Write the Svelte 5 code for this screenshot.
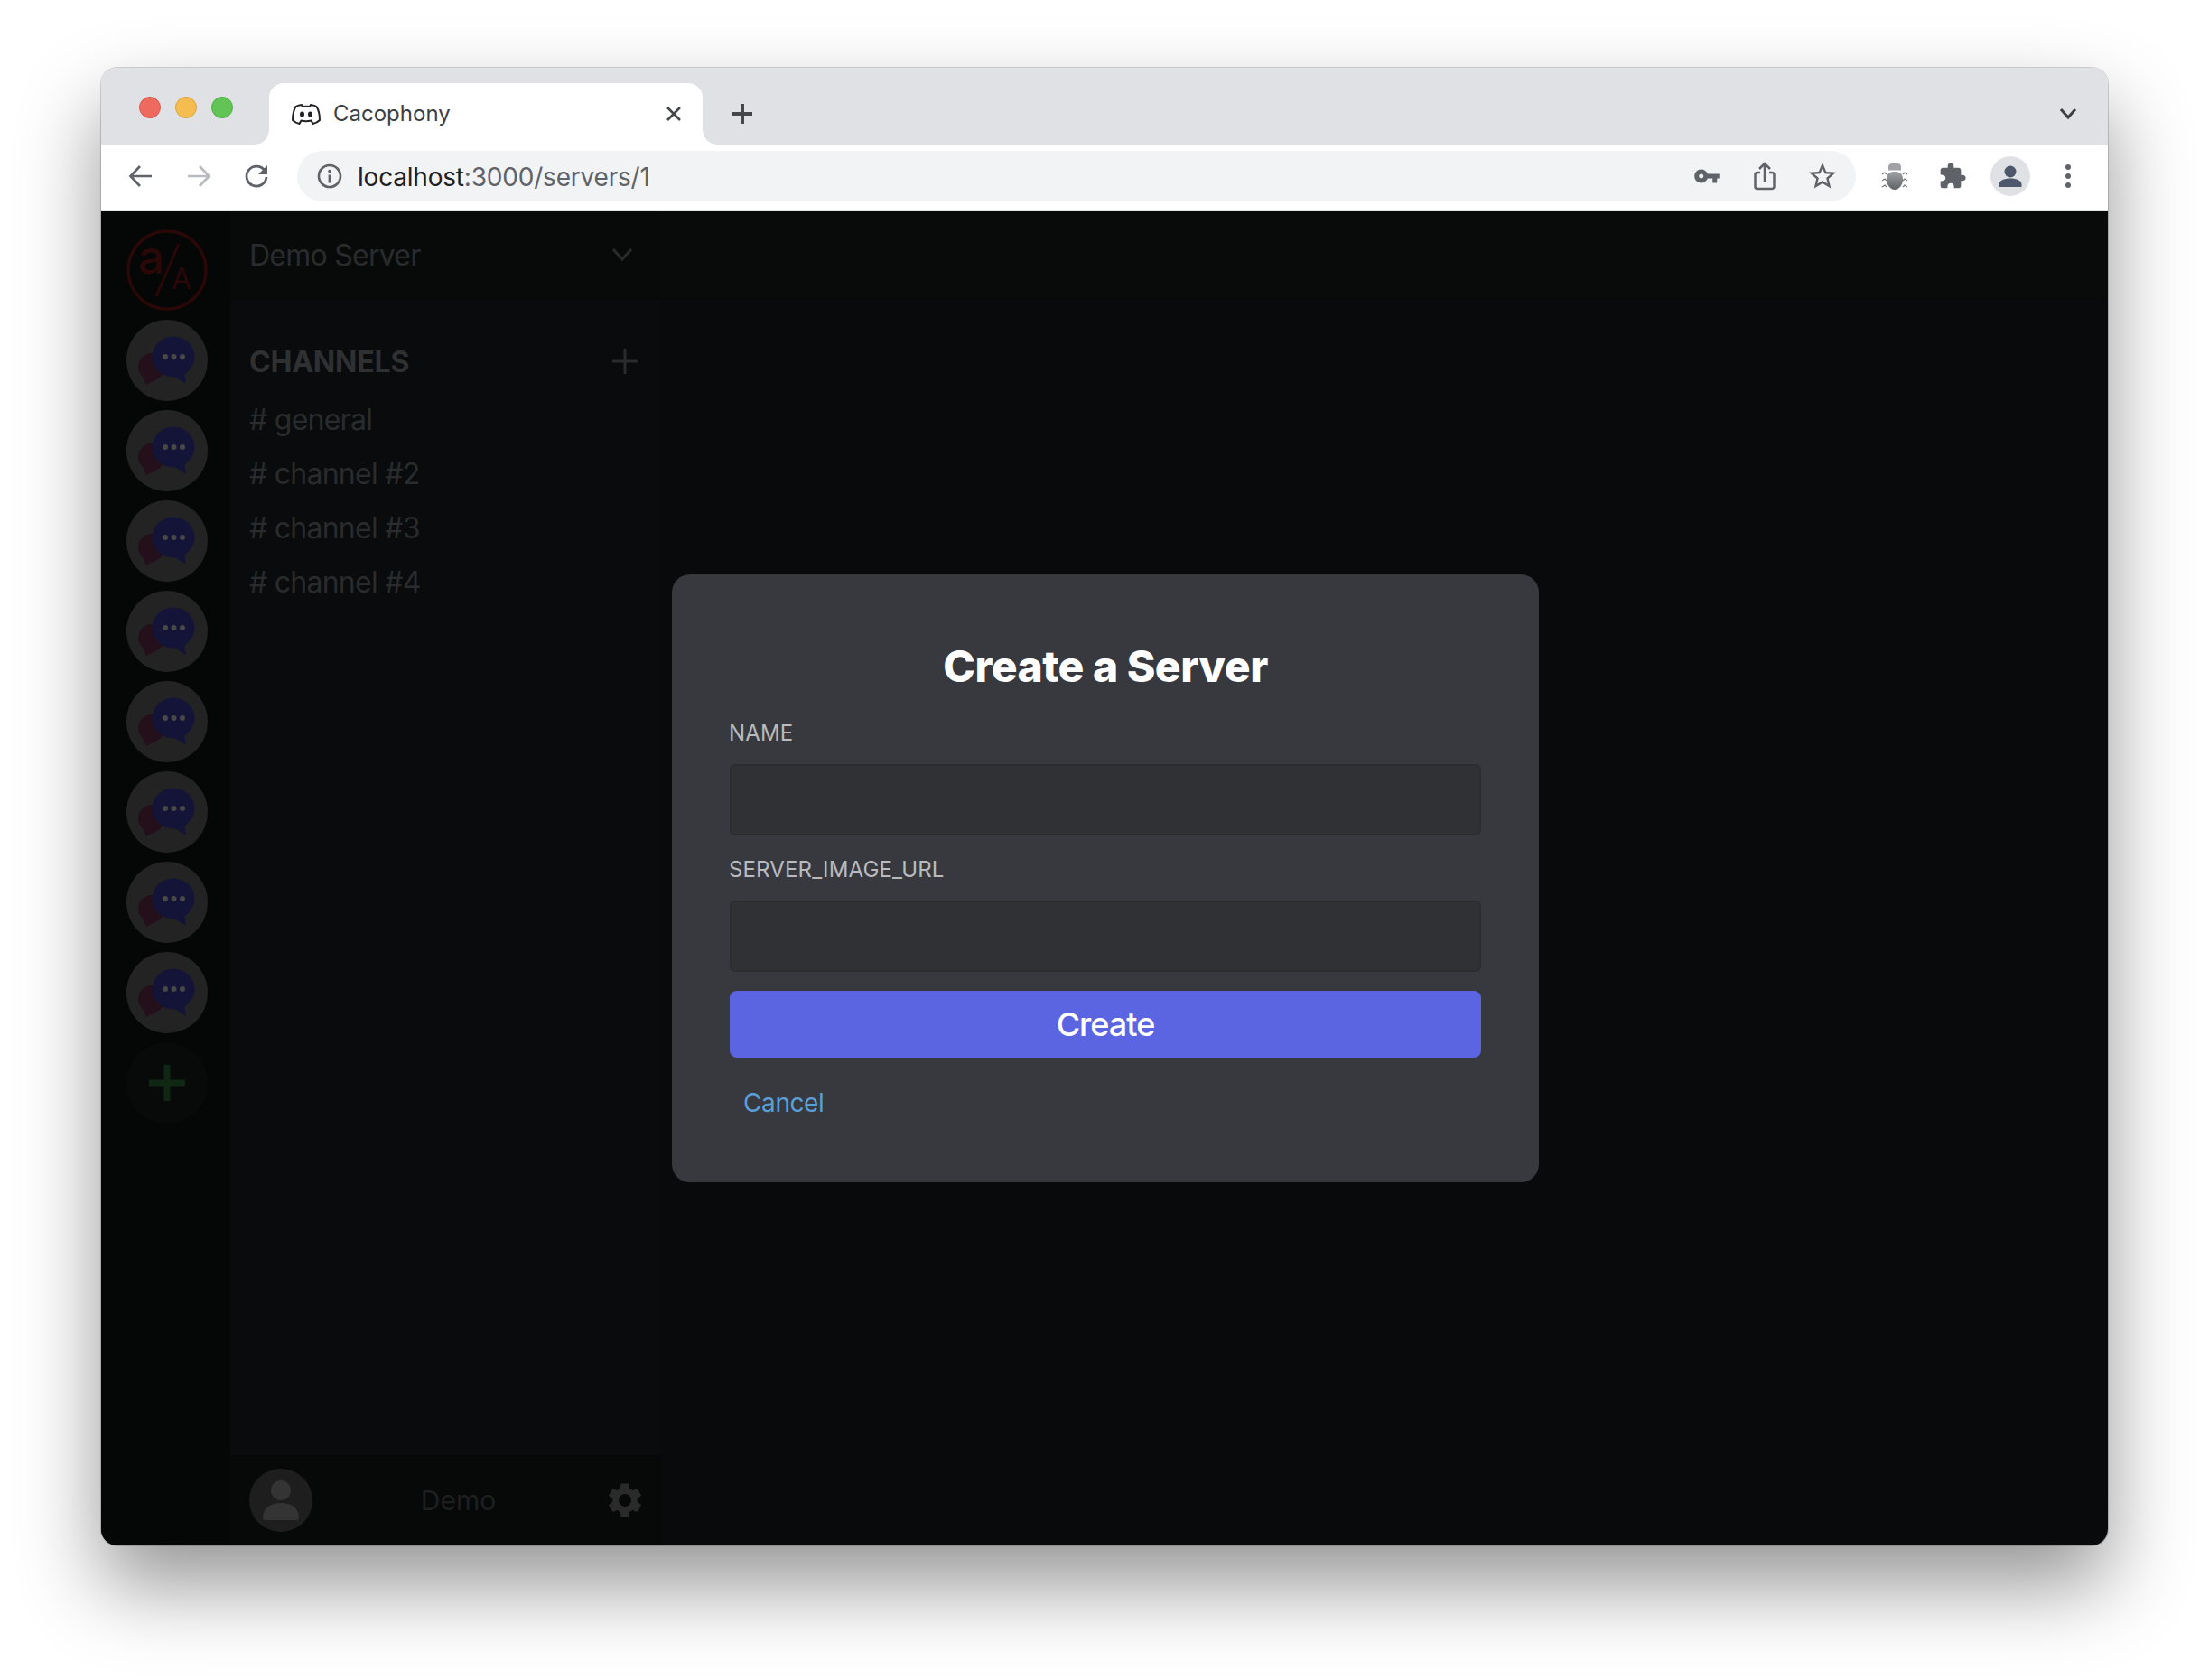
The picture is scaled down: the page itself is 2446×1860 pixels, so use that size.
<script>
  const channels = ['general', 'channel #2', 'channel #3', 'channel #4'];
  const servers = Array.from({ length: 8 }, (_, i) => i + 1);
</script>

<div class="screen">
  <div class="window">
    <div class="tabstrip">
      <div class="lights">
        <span class="light red"></span>
        <span class="light yellow"></span>
        <span class="light green"></span>
      </div>
      <div class="tab">
        <svg class="tab-logo" width="32" height="24" viewBox="0 0 32 24">
          <path d="M11 2C8 2.5 5.5 3.3 4.5 4 2 8 1 13 1 19c2 2 5 3.500 7.500 4l2-3.500c3.500 1 7.500 1 11 0l2 3.500c2.500-.5 5.500-2 7.500-4 0-6-1-11-3.500-15-1-.7-3.500-1.500-6.500-2l-1 2c-2.500-.4-5.500-.4-8 0z" fill="#fff" stroke="#202124" stroke-width="2" stroke-linejoin="round" />
          <ellipse cx="11.500" cy="12.500" rx="2.500" ry="3" fill="#202124" />
          <ellipse cx="20.500" cy="12.500" rx="2.500" ry="3" fill="#202124" />
        </svg>
        <span class="tab-title">Cacophony</span>
        <svg class="tab-close" width="18" height="18" viewBox="0 0 18 18">
          <path d="M2 2l14 14M16 2L2 16" stroke="#45474a" stroke-width="2.600" fill="none" />
        </svg>
      </div>
      <svg class="new-tab" width="28" height="28" viewBox="0 0 28 28">
        <path d="M14 3v22M3 14h22" stroke="#45474a" stroke-width="4" fill="none" />
      </svg>
      <svg class="tab-list" width="20" height="14" viewBox="0 0 20 14">
        <path d="M2 2l8 9 8-9" stroke="#3c4043" stroke-width="3" fill="none" />
      </svg>
    </div>

    <div class="toolbar">
      <div class="slot">
        <svg width="28" height="28" viewBox="0 0 28 28"><path d="M26 14H3M13 3L2.500 14 13 25" stroke="#5f6368" stroke-width="2.700" fill="none" /></svg>
      </div>
      <div class="slot">
        <svg width="28" height="28" viewBox="0 0 28 28"><path d="M2 14h23M15 3l10.500 11L15 25" stroke="#b9bbbe" stroke-width="2.700" fill="none" /></svg>
      </div>
      <div class="slot">
        <svg width="30" height="30" viewBox="0 0 30 30">
          <path d="M24.500 9.500A11 11 0 1 0 26 16" stroke="#5f6368" stroke-width="2.800" fill="none" />
          <path d="M27 3v10H17z" fill="#5f6368" />
        </svg>
      </div>
      <div class="omnibox">
        <svg class="info" width="28" height="28" viewBox="0 0 28 28">
          <circle cx="14" cy="14" r="12" stroke="#5f6368" stroke-width="2.600" fill="none" />
          <circle cx="14" cy="8.500" r="1.800" fill="#5f6368" />
          <path d="M14 12.500v9" stroke="#5f6368" stroke-width="2.800" />
        </svg>
        <span class="url"><b>localhost</b>:3000/servers/1</span>
        <div class="omni-actions">
          <div class="slot">
            <svg width="30" height="30" viewBox="0 0 24 24"><path d="M12.650 10C11.830 7.670 9.610 6 7 6c-3.310 0-6 2.690-6 6s2.690 6 6 6c2.610 0 4.830-1.670 5.650-4H17v4h4v-4h2v-4H12.650zM7 14c-1.100 0-2-.9-2-2s.9-2 2-2 2 .9 2 2-.9 2-2 2z" fill="#5f6368" /></svg>
          </div>
          <div class="slot">
            <svg width="26" height="32" viewBox="0 0 26 32">
              <path d="M8 12H5a2.500 2.500 0 0 0-2.500 2.500v13A2.500 2.500 0 0 0 5 30h16a2.500 2.500 0 0 0 2.500-2.500v-13A2.500 2.500 0 0 0 21 12h-3M13 22V3M7 8l6-6 6 6" stroke="#5f6368" stroke-width="2.500" fill="none" />
            </svg>
          </div>
          <div class="slot">
            <svg width="36" height="36" viewBox="0 0 24 24"><path d="M22 9.240l-7.190-.62L12 2 9.190 8.630 2 9.240l5.460 4.730L5.820 21 12 17.270 18.180 21l-1.630-7.030L22 9.240zM12 15.400l-3.760 2.270 1-4.280-3.320-2.880 4.380-.38L12 6.100l1.710 4.040 4.380.38-3.320 2.880 1 4.280L12 15.400z" fill="#5f6368" /></svg>
          </div>
        </div>
      </div>
      <div class="slot">
        <svg width="30" height="32" viewBox="0 0 30 32">
          <defs>
            <linearGradient id="bugBody" x1="0" y1="0" x2="0" y2="1">
              <stop offset="0" stop-color="#a0a2a5" />
              <stop offset="1" stop-color="#5f6266" />
            </linearGradient>
          </defs>
          <path d="M8 9.500V6a4 4 0 0 1 4-4h6a4 4 0 0 1 4 4v3.500z" fill="#a0a2a5" />
          <path d="M15 11c-6 0-9 2.500-9 9 0 6 4.500 11 9 11s9-5 9-11c0-6.500-3-9-9-9z" fill="url(#bugBody)" />
          <path d="M1 14l3-2 2 2M29 14l-3-2-2 2M1 21l3-2 2 2M29 21l-3-2-2 2M1 28l3-2 2 2M29 28l-3-2-2 2" stroke="#77797c" stroke-width="1.200" fill="none" />
        </svg>
      </div>
      <div class="slot">
        <svg width="32" height="32" viewBox="0 0 24 24"><path d="M20.500 11H19V7c0-1.100-.9-2-2-2h-4V3.500C13 2.120 11.880 1 10.500 1S8 2.120 8 3.500V5H4c-1.100 0-1.990.9-1.990 2v3.800H3.500c1.490 0 2.700 1.210 2.700 2.700s-1.210 2.700-2.700 2.700H2V20c0 1.100.9 2 2 2h3.800v-1.500c0-1.490 1.210-2.700 2.700-2.700 1.490 0 2.700 1.210 2.700 2.700V22H17c1.100 0 2-.9 2-2v-4h1.500c1.380 0 2.500-1.120 2.500-2.500S21.880 11 20.500 11z" fill="#5f6368" /></svg>
      </div>
      <div class="slot">
        <div class="profile">
          <svg width="44" height="44" viewBox="0 0 44 44">
            <circle cx="22" cy="17" r="6.500" fill="#4d586c" />
            <path d="M9.500 34v-3c0-4 5.500-6.500 12.500-6.500S34.500 27 34.500 31v3z" fill="#4d586c" />
          </svg>
        </div>
      </div>
      <div class="slot">
        <svg width="8" height="30" viewBox="0 0 8 30">
          <circle cx="4" cy="5" r="3" fill="#5f6368" />
          <circle cx="4" cy="15" r="3" fill="#5f6368" />
          <circle cx="4" cy="25" r="3" fill="#5f6368" />
        </svg>
      </div>
    </div>

    <div class="page">
      <nav class="rail">
        <svg class="server logo" width="90" height="90" viewBox="0 0 90 90">
          <circle cx="45" cy="45" r="43" fill="none" stroke="#2a0808" stroke-width="3.500" />
          <text x="13" y="49" class="logo-a">a</text>
          <path d="M58 16L33 74" stroke="#2a0808" stroke-width="3" />
          <text x="50" y="66" class="logo-b">A</text>
        </svg>
        {#each servers as server (server)}
          <svg class="server" width="90" height="90" viewBox="0 0 90 90">
            <circle cx="45" cy="45" r="45" fill="#232323" />
            <circle cx="28" cy="52" r="15" fill="#24101b" />
            <path d="M17 60l5 12 12-6z" fill="#24101b" />
            <ellipse cx="52" cy="41" rx="23.500" ry="22.500" fill="#141438" />
            <path d="M52 62l14 9-2-14z" fill="#141438" />
            <circle cx="43" cy="41" r="3" fill="#484848" />
            <circle cx="52.500" cy="41" r="3" fill="#484848" />
            <circle cx="62" cy="41" r="3" fill="#484848" />
          </svg>
        {/each}
        <div class="server add-server">
          <svg width="44" height="44" viewBox="0 0 44 44"><path d="M22 2v40M2 22h40" stroke="#0f2713" stroke-width="7" /></svg>
        </div>
      </nav>

      <aside class="panel">
        <header class="server-head">
          <span class="server-name">Demo Server</span>
          <svg width="24" height="16" viewBox="0 0 24 16"><path d="M2 2l10 11L22 2" stroke="#2a2b2c" stroke-width="3" fill="none" /></svg>
        </header>
        <div class="channel-list">
          <div class="channel-title">
            <span>CHANNELS</span>
            <svg width="28" height="28" viewBox="0 0 28 28"><path d="M14 0v28M0 14h28" stroke="#2a2b2c" stroke-width="3" /></svg>
          </div>
          {#each channels as channel (channel)}
            <div class="channel"># {channel}</div>
          {/each}
        </div>
        <footer class="user-bar">
          <div class="avatar">
            <svg width="70" height="70" viewBox="0 0 70 70">
              <circle cx="35" cy="24" r="11" fill="#343434" />
              <path d="M15 55c0-12 9-17 20-17s20 5 20 17c0 1-1 2-3 2H18c-2 0-3-1-3-2z" fill="#343434" />
            </svg>
          </div>
          <span class="user-name">Demo</span>
          <svg width="46" height="46" viewBox="0 0 24 24"><path d="M19.140 12.940c.04-.3.06-.61.06-.94 0-.32-.02-.64-.07-.94l2.030-1.580c.18-.14.23-.41.12-.61l-1.920-3.320c-.12-.22-.37-.29-.59-.22l-2.390.96c-.5-.38-1.030-.7-1.620-.94l-.36-2.540c-.04-.24-.24-.41-.48-.41h-3.840c-.24 0-.43.17-.47.41l-.36 2.540c-.59.24-1.130.57-1.620.94l-2.390-.96c-.22-.08-.47 0-.59.22L2.740 8.870c-.12.21-.08.47.12.61l2.030 1.580c-.05.3-.09.63-.09.94s.02.64.07.94l-2.030 1.580c-.18.14-.23.41-.12.61l1.920 3.320c.12.22.37.29.59.22l2.390-.96c.5.38 1.030.7 1.620.94l.36 2.540c.05.24.24.41.48.41h3.840c.24 0 .44-.17.47-.41l.36-2.540c.59-.24 1.130-.56 1.620-.94l2.390.96c.22.08.47 0 .59-.22l1.920-3.320c.12-.22.07-.47-.12-.61l-2.010-1.580zM12 15.600c-1.980 0-3.600-1.620-3.600-3.600s1.620-3.600 3.600-3.600 3.600 1.620 3.600 3.600-1.620 3.600-3.600 3.600z" fill="#2a2a2a" /></svg>
        </footer>
      </aside>

      <main class="main">
        <div class="main-head"></div>
      </main>

      <div class="overlay">
        <form class="modal" on:submit|preventDefault>
          <h1>Create a Server</h1>
          <label for="name">NAME</label>
          <input id="name" type="text" />
          <label for="image">SERVER_IMAGE_URL</label>
          <input id="image" type="text" />
          <button type="submit">Create</button>
          <a href="#cancel" class="cancel">Cancel</a>
        </form>
      </div>
    </div>
  </div>
</div>

<style>
  :global(body) {
    margin: 0;
    background: #fff;
  }

  .screen {
    box-sizing: border-box;
    height: 1860px;
    padding: 75px 112px 0;
    overflow: hidden;
  }

  .window {
    position: relative;
    height: 1636px;
    border-radius: 18px;
    display: flex;
    flex-direction: column;
    font-family: Inter, 'Liberation Sans', sans-serif;
    box-shadow: 0 0 0 1px rgba(0, 0, 0, 0.16), 0 44px 90px rgba(0, 0, 0, 0.42);
  }

  .tabstrip {
    height: 85px;
    flex: none;
    box-sizing: border-box;
    padding-top: 17px;
    background: #dfe1e5;
    border-radius: 18px 18px 0 0;
    display: flex;
    align-items: center;
  }

  .lights {
    display: flex;
    gap: 16px;
    margin-left: 42px;
    align-self: flex-start;
    margin-top: 15px;
  }

  .light {
    width: 24px;
    height: 24px;
    border-radius: 50%;
    box-sizing: border-box;
  }

  .red { background: #ee6a5f; border: 1px solid #d6574d; }
  .yellow { background: #f5bd4f; border: 1px solid #d9a540; }
  .green { background: #61c454; border: 1px solid #52ad46; }

  .tab {
    position: relative;
    width: 480px;
    height: 68px;
    margin-left: 40px;
    box-sizing: border-box;
    padding: 0 23px 0 25px;
    background: #fff;
    border-radius: 16px 16px 0 0;
    display: flex;
    align-items: center;
  }

  .tab::before,
  .tab::after {
    content: '';
    position: absolute;
    bottom: 0;
    width: 16px;
    height: 16px;
  }

  .tab::before {
    left: -16px;
    background: radial-gradient(circle at 0 0, transparent 15.500px, #fff 16px);
  }

  .tab::after {
    right: -16px;
    background: radial-gradient(circle at 100% 0, transparent 15.500px, #fff 16px);
  }

  .tab-title {
    margin-left: 14px;
    padding-bottom: 2px;
    font-size: 24px;
    color: #3c4043;
  }

  .tab-close {
    margin-left: auto;
  }

  .new-tab {
    margin-left: 30px;
  }

  .tab-list {
    margin-left: auto;
    margin-right: 34px;
  }

  .toolbar {
    height: 74px;
    flex: none;
    box-sizing: border-box;
    padding: 8px 16px 10px;
    border-bottom: 2px solid #e3e4e6;
    background: #fff;
    display: flex;
    gap: 8px;
    align-items: center;
  }

  .slot {
    width: 56px;
    height: 56px;
    flex: none;
    display: flex;
    align-items: center;
    justify-content: center;
  }

  .omnibox {
    flex: 1;
    height: 56px;
    margin: 0 7px 0 9px;
    padding: 0 9px 0 22px;
    background: #f1f3f4;
    border-radius: 28px;
    display: flex;
    align-items: center;
  }

  .url {
    margin-left: 17px;
    padding-top: 1px;
    font-size: 28px;
    letter-spacing: -0.2px;
    color: #5f6368;
  }

  .url b {
    font-weight: 400;
    color: #202124;
  }

  .omni-actions {
    margin-left: auto;
    display: flex;
    gap: 8px;
  }

  .profile {
    width: 44px;
    height: 44px;
    border-radius: 50%;
    background: #dfe1e5;
  }

  .profile svg {
    display: block;
  }

  .page {
    position: relative;
    flex: 1;
    min-height: 0;
    display: flex;
    background: #090a0b;
    border-radius: 0 0 18px 18px;
    overflow: hidden;
  }

  .rail {
    width: 143px;
    flex: none;
    box-sizing: border-box;
    padding: 20px 0 0 28px;
    background: #050606;
    display: flex;
    flex-direction: column;
    gap: 10px;
  }

  .server {
    display: block;
    flex: none;
  }

  .logo {
    overflow: visible;
  }

  .logo-a {
    font-size: 52px;
    font-weight: 500;
    fill: #2a0808;
  }

  .logo-b {
    font-size: 32px;
    font-weight: 400;
    fill: #2a0808;
  }

  .add-server {
    width: 90px;
    height: 90px;
    border-radius: 50%;
    background: #080a0a;
    display: flex;
    align-items: center;
    justify-content: center;
  }

  .panel {
    width: 477px;
    flex: none;
    background: #090b0c;
    display: flex;
    flex-direction: column;
  }

  .server-head {
    height: 98px;
    flex: none;
    box-sizing: border-box;
    padding: 0 31px 0 21px;
    background: #080a0a;
    border-bottom: 2px solid #070808;
    display: flex;
    align-items: center;
    justify-content: space-between;
    font-size: 32px;
    letter-spacing: -0.75px;
    color: #2a2b2c;
  }

  .channel-list {
    flex: 1;
    padding: 38px 21px 0;
  }

  .channel-title {
    height: 60px;
    margin-bottom: 5px;
    padding-right: 5px;
    display: flex;
    align-items: center;
    justify-content: space-between;
    font-size: 32px;
    font-weight: 700;
    letter-spacing: -0.2px;
    color: #2f3031;
  }

  .channel {
    height: 60px;
    line-height: 60px;
    font-size: 32px;
    letter-spacing: -0.75px;
    color: #2a2b2c;
  }

  .user-bar {
    height: 100px;
    flex: none;
    box-sizing: border-box;
    padding: 0 17px 0 21px;
    background: #070808;
    display: flex;
    align-items: center;
    justify-content: space-between;
    font-size: 30px;
    color: #1f1f20;
  }

  .avatar {
    width: 70px;
    height: 70px;
    border-radius: 50%;
    background: #1e1e1e;
  }

  .avatar svg {
    display: block;
  }

  .main {
    flex: 1;
    border-left: 1px solid #080909;
  }

  .main-head {
    height: 98px;
    box-sizing: border-box;
    background: #090a0a;
    border-bottom: 2px solid #080909;
  }

  .overlay {
    position: absolute;
    inset: 0 0 0 2px;
    display: flex;
    align-items: center;
    justify-content: center;
  }

  .modal {
    width: 960px;
    height: 673px;
    box-sizing: border-box;
    padding: 72px 64px 0;
    background: #38393e;
    border-radius: 20px;
    display: flex;
    flex-direction: column;
  }

  h1 {
    margin: 0;
    height: 60px;
    line-height: 60px;
    text-align: center;
    font-size: 48px;
    font-weight: 800;
    letter-spacing: -0.5px;
    color: #fff;
  }

  label {
    margin: 29px 0 0 -1px;
    height: 30px;
    line-height: 30px;
    font-size: 24px;
    letter-spacing: 0.15px;
    color: #b9bbbe;
  }

  input {
    box-sizing: border-box;
    display: block;
    width: 100%;
    height: 79px;
    margin: 19px 0 0;
    border: 2px solid #2c2d31;
    border-radius: 6px;
    background: #303135;
  }

  input + label {
    margin-top: 23px;
  }

  button {
    height: 74px;
    margin-top: 21px;
    border: 0;
    border-radius: 8px;
    background: #5b65e1;
    color: #fff;
    font-family: inherit;
    font-size: 36px;
    font-weight: 500;
    letter-spacing: -1px;
  }

  .cancel {
    margin: 32px 0 0 15px;
    font-size: 28px;
    line-height: 36px;
    letter-spacing: -0.4px;
    color: #5a9fd9;
    text-decoration: none;
  }
</style>
